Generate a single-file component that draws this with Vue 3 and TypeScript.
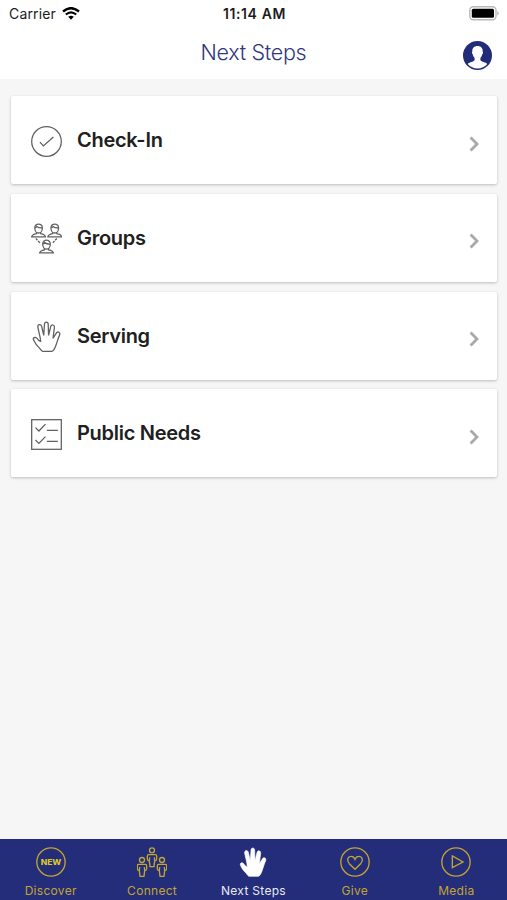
<script setup lang="ts">
interface Item {
  id: string
  label: string
}

const handPath =
  'M34 88C30 88 28 83 24 78C17 72 12 65 8 56C4 48 12 45 17 50C20 55 24 58 28 59C27 44 22 31 20 18C19 9 29 8 31 16L37 42L39 10C39 1 50 1 50 10L51 42L57 17C59 8 69 11 68 19L64 50L73 36C77 28 86 33 83 41C78 52 76 61 73 69C70 78 66 88 60 88Z'

const cards: Item[] = [
  { id: 'check', label: 'Check-In' },
  { id: 'groups', label: 'Groups' },
  { id: 'serving', label: 'Serving' },
  { id: 'needs', label: 'Public Needs' },
]

const tabs: Item[] = [
  { id: 'discover', label: 'Discover' },
  { id: 'connect', label: 'Connect' },
  { id: 'next', label: 'Next Steps' },
  { id: 'give', label: 'Give' },
  { id: 'media', label: 'Media' },
]

const groupOffsets: [number, number][] = [[22, 2], [69, 2], [45, 49]]
const connectOffsets: [number, number][] = [[45, 2], [15, 31], [75, 31]]
</script>

<template>
  <div class="screen">
    <header class="header">
      <div class="status">
        <div class="carrier">
          <span>Carrier</span>
          <svg class="wifi" viewBox="0 0 18 13">
            <path d="M1 4.5Q9-2.2 17 4.5" stroke-width="2.4" />
            <path d="M3.8 7.5Q9 3.1 14.2 7.5" stroke-width="2.2" />
            <path class="dot" d="M6.2 9.8Q9 7.5 11.8 9.8L9 12.8Z" />
          </svg>
        </div>
        <span class="time">11:14 AM</span>
        <svg class="battery" viewBox="0 0 31 15">
          <rect x=".8" y=".8" width="26.2" height="13" rx="3.5" fill="#fff" stroke="#b9b9b9" stroke-width="1.4" />
          <rect x="2.8" y="2.8" width="22.2" height="9" rx="1.5" fill="#000" />
          <path d="M28.4 5Q31 7.3 28.4 9.6Z" fill="#aaa" />
        </svg>
      </div>
      <div class="titlebar">
        <h1>Next Steps</h1>
        <svg class="avatar" viewBox="0 0 28 28">
          <circle cx="14" cy="14" r="14" fill="#222d7a" />
          <path
            d="M14 4.8C10.4 4.8 8.7 7.2 9 10.3C8.3 10.6 8.7 12.5 9.5 13C9.8 14.6 10.5 15.6 11.2 16.4V18.6C10 20.4 6.2 20.2 4.6 22.2A12.3 12.3 0 0 0 23.4 22.2C21.8 20.2 18 20.4 16.8 18.6V16.4C17.5 15.6 18.2 14.6 18.5 13C19.3 12.5 19.7 10.6 19 10.3C19.3 7.2 17.6 4.8 14 4.8Z"
            fill="#fff"
          />
        </svg>
      </div>
    </header>

    <main class="list">
      <article v-for="card in cards" :key="card.id" class="card">
        <svg class="card-icon" viewBox="0 0 90 90">
          <template v-if="card.id === 'check'">
            <circle cx="45" cy="45" r="43" />
            <path d="M26 47L36 58L65 32" />
          </template>
          <template v-else-if="card.id === 'groups'">
            <g v-for="([x, y], i) in groupOffsets" :key="i" :transform="`translate(${x} ${y})`">
              <path d="M-11 13C-12-3 12-3 11 13C11 21 6 27 0 27S-11 21-11 13ZM-11 12Q-7 12-5 8Q2 13 11 12" />
              <path d="M-6 25V29C-16 31-19 32-20 38H20C19 32 16 31 6 29V25" />
            </g>
            <path d="M14 45L26 58M75 45L63 58" stroke-dasharray="7 3" />
          </template>
          <path v-else-if="card.id === 'serving'" :d="handPath" />
          <template v-else>
            <rect x="2" y="2" width="86" height="86" />
            <path d="M13 25L23 35L42 15M46 33H78M13 61L23 71L42 51M46 65H78" />
          </template>
        </svg>
        <h2>{{ card.label }}</h2>
        <svg class="chevron" viewBox="0 0 10 16">
          <path d="M1.6 1.6L8 8L1.6 14.4" />
        </svg>
      </article>
    </main>

    <nav class="tabs">
      <div v-for="tab in tabs" :key="tab.id" class="tab" :class="{ active: tab.id === 'next' }">
        <svg class="tab-icon" viewBox="0 0 90 90">
          <path v-if="tab.id === 'next'" class="solid" :d="handPath" />
          <template v-else-if="tab.id === 'connect'">
            <g v-for="([x, y], i) in connectOffsets" :key="i" :transform="`translate(${x} ${y})`">
              <circle cx="0" cy="8" r="7.5" />
              <path d="M-10 21H10Q14 21 14 26V34Q14 39 8 40L6 57H-6L-8 40Q-14 39-14 34V26Q-14 21-10 21ZM-7 29L-8 40M7 29L8 40" />
            </g>
          </template>
          <template v-else>
            <circle cx="45" cy="45" r="42.5" />
            <text v-if="tab.id === 'discover'" x="45" y="53" text-anchor="middle" textLength="62" lengthAdjust="spacingAndGlyphs">NEW</text>
            <path v-else-if="tab.id === 'give'" d="M45 67L28 50C18 39 24 27 34 28C40 28 43 32 45 37C47 32 50 28 56 28C66 27 72 39 62 50Z" />
            <path v-else d="M34 27V62L66 45Z" />
          </template>
        </svg>
        <span>{{ tab.label }}</span>
      </div>
    </nav>
  </div>
</template>

<style>
body {
  margin: 0;
}
</style>

<style scoped>
.screen {
  width: 100%;
  height: 100vh;
  display: flex;
  flex-direction: column;
  overflow: hidden;
  background: #f6f6f6;
  font-family: Inter, "Liberation Sans", sans-serif;
}
svg {
  display: block;
  flex: none;
  fill: none;
}
.header {
  height: 79px;
  flex: none;
  background: #fff;
}
.status {
  height: 27px;
  box-sizing: border-box;
  padding: 0 7px 0 9px;
  display: grid;
  grid-template-columns: 1fr auto 1fr;
  align-items: center;
  color: #1c1c1c;
}
.carrier {
  display: flex;
  align-items: center;
  gap: 6px;
  font-size: 14px;
  letter-spacing: 0.15px;
}
.wifi {
  width: 18px;
  height: 13px;
  stroke: #000;
}
.wifi .dot {
  fill: #000;
  stroke: none;
}
.time {
  font-size: 14px;
  font-weight: 600;
  letter-spacing: 0.6px;
}
.battery {
  width: 31px;
  height: 15px;
  justify-self: end;
}
.titlebar {
  height: 52px;
  box-sizing: border-box;
  padding: 0 15px 0 44px;
  display: flex;
  align-items: center;
}
h1 {
  flex: 1;
  margin: 0;
  padding-bottom: 2px;
  text-align: center;
  color: #30377f;
  font-size: 21.5px;
  font-weight: 300;
  line-height: 48px;
  letter-spacing: -0.3px;
}
.avatar {
  width: 29px;
  height: 29px;
  margin-top: 4px;
}
.list {
  flex: 1;
  display: flex;
  flex-direction: column;
  gap: 9.8px;
  padding: 17px 10px 0 11px;
}
.card {
  height: 88px;
  flex: none;
  box-sizing: border-box;
  padding: 0 18px 0 20px;
  display: flex;
  align-items: center;
  background: #fff;
  border-radius: 2px;
  box-shadow: 0 1px 3px rgba(0, 0, 0, 0.24);
}
.card-icon {
  width: 31px;
  height: 31px;
  margin-top: 2px;
  stroke: #606060;
  stroke-width: 3.7;
}
h2 {
  flex: 1;
  margin: 0 0 0 15px;
  color: #202020;
  font-size: 20px;
  font-weight: 600;
  line-height: 24px;
  letter-spacing: -0.28px;
}
.chevron {
  width: 10px;
  height: 16px;
  margin-top: 7px;
  stroke: #a9a9a9;
  stroke-width: 2.8;
}
.tabs {
  height: 61px;
  flex: none;
  box-sizing: border-box;
  padding-top: 8px;
  display: grid;
  grid-template-columns: repeat(5, 1fr);
  background: #232d79;
}
.tab {
  display: flex;
  flex-direction: column;
  align-items: center;
  gap: 6px;
  color: #c2a534;
  font-size: 12px;
  line-height: 16px;
  letter-spacing: 0.3px;
}
.tab-icon {
  width: 30px;
  height: 30px;
  stroke: #c2a534;
  stroke-width: 4;
}
.tab-icon text {
  fill: #d8c52c;
  stroke: none;
  font-size: 22px;
  font-weight: 800;
  letter-spacing: 0;
}
.tab-icon .solid {
  fill: #fff;
  stroke: #fff;
  stroke-width: 2;
}
.active {
  color: #e9eaf3;
}
</style>
